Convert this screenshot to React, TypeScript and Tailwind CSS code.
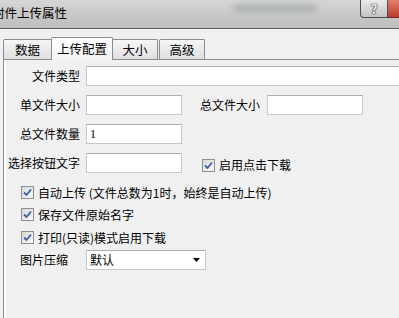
import * as React from 'react'

const FONT = "font-['Noto_Sans_CJK_SC','Microsoft_YaHei',sans-serif]"

const TextBox: React.FC<{ className?: string; value?: string }> = ({
  className,
  value,
}) => (
  <div
    className={`h-[20px] bg-white border border-[#c5c8cf] border-t-[#abadb3] flex items-center pl-[3px] text-[12px] leading-none font-['Liberation_Serif',serif] ${className ?? ''}`}
  >
    {value}
  </div>
)

const CheckBox: React.FC = () => (
  <div className="w-[13px] h-[13px] border border-[#8e8f8f] bg-gradient-to-br from-[#d8d8d8] to-[#f8f8f8] flex items-center justify-center shrink-0">
    <svg width="9" height="9" viewBox="0 0 9 9">
      <path
        d="M1 4.5 L3.5 7 L8 1.5"
        fill="none"
        stroke="#3c5ea8"
        strokeWidth="1.8"
      />
    </svg>
  </div>
)

const Check: React.FC<{ label: string; className?: string }> = ({
  label,
  className,
}) => (
  <div className={`flex items-center gap-[4px] ${className ?? ''}`}>
    <CheckBox />
    <span className="text-[12px] leading-none">{label}</span>
  </div>
)

const Label: React.FC<{ children: React.ReactNode }> = ({ children }) => (
  <div className="w-[74px] text-right text-[12px] leading-none mr-[6px]">
    {children}
  </div>
)

const Tab: React.FC<{ label: string; active?: boolean; className?: string }> = ({
  label,
  active,
  className,
}) => (
  <div
    className={
      active
        ? `h-[23px] -mb-px bg-gradient-to-b from-[#ffffff] to-[#f4f4f4] border border-b-0 border-[#898c95] rounded-t-[2px] flex items-center justify-center text-[12.5px] z-10 ${className ?? ''}`
        : `h-[20px] bg-gradient-to-b from-[#f6f6f6] to-[#dedede] border border-b-0 border-[#898c95] rounded-t-[2px] flex items-center justify-center pt-[2px] text-[12.5px] ${className ?? ''}`
    }
  >
    {label}
  </div>
)

export default function App() {
  return (
    <div
      className={`w-[399px] h-[318px] overflow-hidden bg-[#f0f0f0] text-black flex flex-col ${FONT}`}
    >
      <div className="h-[29px] shrink-0 flex items-start bg-gradient-to-b from-[#d6d6d6] via-[#c9c9c9] to-[#bdbdbd] border-b border-[#5a5a5a]">
        <div className="ml-[-8px] mt-[7px] text-[12.5px] leading-none whitespace-nowrap">
          附件上传属性
        </div>
        <div className="ml-[165px] mt-[4px] w-[85px] h-[8px] rounded-full bg-[#7f8a8a] opacity-40 blur-[3px]" />
        <div className="ml-auto w-[28px] h-[18px] bg-gradient-to-b from-[#eaeaea] to-[#c4c4c4] border border-t-0 border-[#4e4e4e] rounded-bl-[4px] flex items-center justify-center">
          <span className="text-[13px] font-bold leading-none text-[#f4f4f4] [text-shadow:0_0_1px_#222,0_0_1px_#222,0_0_1px_#222]">
            ?
          </span>
        </div>
        <div className="w-[11px] h-[18px] bg-gradient-to-b from-[#e08070] to-[#b83a2a] border-b border-[#6a2a20]" />
      </div>

      <div className="h-[30px] shrink-0 flex items-end pl-[3px]">
        <Tab label="数据" className="w-[49px]" />
        <Tab label="上传配置" active className="w-[62px] -ml-px" />
        <Tab label="大小" className="w-[46px] -ml-px" />
        <Tab label="高级" className="w-[46px] ml-px" />
      </div>

      <div className="flex-1 ml-[3px] border-l border-t border-[#898c95] flex">
        <div className="w-[2px] bg-[#fbfbfb]" />
        <div className="flex-1 flex flex-col pt-[6px]">
          <div className="flex items-center h-[20px]">
            <Label>文件类型</Label>
            <TextBox className="flex-1 -mr-[20px]" />
          </div>

          <div className="flex items-center h-[20px] mt-[9px]">
            <Label>单文件大小</Label>
            <TextBox className="w-[96px]" />
            <span className="ml-[18px] text-[12px] leading-none">总文件大小</span>
            <TextBox className="w-[96px] ml-[7px]" />
          </div>

          <div className="flex items-center h-[20px] mt-[9px]">
            <Label>总文件数量</Label>
            <TextBox className="w-[96px]" value="1" />
          </div>

          <div className="flex items-center h-[20px] mt-[9px]">
            <Label>选择按钮文字</Label>
            <TextBox className="w-[96px]" />
            <Check label="启用点击下载" className="ml-[20px] mt-[4px]" />
          </div>

          <Check
            label="自动上传 (文件总数为1时，始终是自动上传)"
            className="ml-[15px] mt-[13px]"
          />
          <Check label="保存文件原始名字" className="ml-[15px] mt-[9px]" />
          <Check label="打印(只读)模式启用下载" className="ml-[15px] mt-[10px]" />

          <div className="flex items-center h-[20px] mt-[6px]">
            <span className="ml-[14px] w-[66px] text-[12px] leading-none">图片压缩</span>
            <div className="w-[120px] h-[20px] bg-white border border-[#c5c8cf] border-t-[#abadb3] flex items-center pl-[3px] pr-[5px]">
              <span className="text-[12px] leading-none">默认</span>
              <svg className="ml-auto" width="7" height="4" viewBox="0 0 7 4">
                <path d="M0 0 H7 L3.5 4 Z" fill="#000" />
              </svg>
            </div>
          </div>
        </div>
      </div>
    </div>
  )
}
